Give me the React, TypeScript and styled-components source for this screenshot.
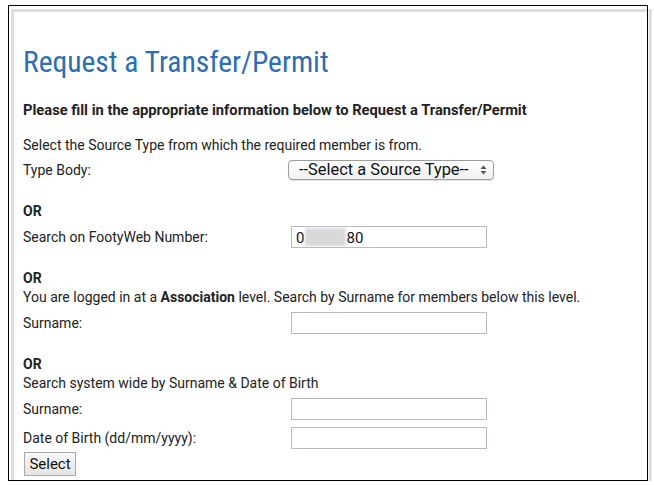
import React from "react";
import styled, { createGlobalStyle } from "styled-components";

const bodyFont = `Roboto, "Liberation Sans", sans-serif`;
const titleFont = `"Roboto Condensed", Roboto, "Liberation Sans", sans-serif`;

const GlobalStyle = createGlobalStyle`
  html, body {
    margin: 0;
    padding: 0;
    background: #ffffff;
  }
  body {
    font-family: ${bodyFont};
    color: #222222;
  }
`;

const Frame = styled.div`
  position: relative;
  margin: 5px 0 0 8px;
  width: 638px;
  height: 474px;
  border: 1px solid #000000;
  &::after {
    content: "";
    position: absolute;
    top: 3px;
    right: -5px;
    bottom: -6px;
    width: 3px;
    background: linear-gradient(to right, #d2d2d2, #ececec);
  }
`;

const Page = styled.div`
  margin: 3px 0 0 2px;
  height: 471px;
  box-sizing: border-box;
  border-top: 3px solid #dedede;
  border-left: 3px solid #dedede;
  padding: 33px 0 0 9px;
  overflow: hidden;
`;

const Title = styled.h1`
  margin: 0;
  font-family: ${titleFont};
  font-stretch: condensed;
  font-weight: 400;
  font-size: 29.5px;
  line-height: 35px;
  color: #2b6fb2;
`;

const Lead = styled.p`
  margin: 21px 0 0;
  font-size: 14.7px;
  line-height: 19px;
  font-weight: 700;
`;

const Text = styled.p<{ $gap?: number }>`
  margin: ${(p) => p.$gap ?? 0}px 0 0;
  font-size: 14px;
  line-height: 19px;
  b {
    font-weight: 700;
  }
`;

const Or = styled.p`
  margin: 20px 0 0;
  font-size: 14px;
  line-height: 19px;
  font-weight: 700;
`;

const Row = styled.div<{ $gap?: number }>`
  display: grid;
  grid-template-columns: 268px 1fr;
  align-items: center;
  height: 24px;
  margin-top: ${(p) => p.$gap ?? 3}px;
  font-size: 14px;
`;

const Field = styled.div`
  position: relative;
  width: 196px;
  height: 22px;
`;

const Input = styled.input`
  box-sizing: border-box;
  width: 196px;
  height: 22px;
  margin: 0;
  padding: 1px 4px 0;
  border: 1px solid #b9b9c2;
  border-radius: 0;
  background: #ffffff;
  font-family: ${bodyFont};
  font-size: 15px;
  color: #111111;
  outline: none;
`;

const Blur = styled.span`
  position: absolute;
  left: 14px;
  top: 2px;
  width: 41px;
  height: 18px;
  background: #d8d8d8;
  filter: blur(1.5px);
`;

const SelectWrap = styled.div`
  position: relative;
  width: 206px;
  height: 20px;
  margin-left: -3px;
`;

const Select = styled.select`
  appearance: none;
  box-sizing: border-box;
  width: 206px;
  height: 20px;
  margin: 0;
  padding: 0 0 0 10px;
  border: 1px solid #9c9c9c;
  border-radius: 4px;
  background: linear-gradient(#ffffff, #f1f1f1);
  box-shadow: 0 1px 1px rgba(0, 0, 0, 0.12);
  font-family: ${bodyFont};
  font-size: 16.4px;
  line-height: 18px;
  color: #111111;
`;

const Arrows = styled.svg`
  position: absolute;
  right: 7px;
  top: 5px;
  pointer-events: none;
`;

const Button = styled.button`
  margin: 2px 0 0 1px;
  box-sizing: border-box;
  width: 52px;
  height: 24px;
  padding: 0;
  border: 1px solid #a9a9a9;
  background: linear-gradient(#f8f8f8, #e4e4e4);
  font-family: ${bodyFont};
  font-size: 15px;
  color: #111111;
`;

export default function App() {
  return (
    <>
      <GlobalStyle />
      <Frame>
        <Page>
          <Title>Request a Transfer/Permit</Title>
          <Lead>Please fill in the appropriate information below to Request a Transfer/Permit</Lead>
          <Text $gap={16}>Select the Source Type from which the required member is from.</Text>
          <Row>
            <span>Type Body:</span>
            <SelectWrap>
              <Select defaultValue="">
                <option value="">--Select a Source Type--</option>
              </Select>
              <Arrows width="7" height="10" viewBox="0 0 7 10">
                <path d="M3.5 0.5 L6.5 4 H0.5 Z M3.5 9.5 L0.5 6 H6.5 Z" fill="#555555" />
              </Arrows>
            </SelectWrap>
          </Row>

          <Or>OR</Or>
          <Row $gap={4}>
            <span>Search on FootyWeb Number:</span>
            <Field>
              <Input defaultValue={"0\u2007\u2007\u2007\u2007\u200780"} />
              <Blur />
            </Field>
          </Row>

          <Or>OR</Or>
          <Text>
            You are logged in at a <b>Association</b> level. Search by Surname for members below this level.
          </Text>
          <Row $gap={4}>
            <span>Surname:</span>
            <Field>
              <Input />
            </Field>
          </Row>

          <Or>OR</Or>
          <Text>Search system wide by Surname &amp; Date of Birth</Text>
          <Row $gap={4}>
            <span>Surname:</span>
            <Field>
              <Input />
            </Field>
          </Row>
          <Row $gap={5}>
            <span>Date of Birth (dd/mm/yyyy):</span>
            <Field>
              <Input />
            </Field>
          </Row>
          <Button>Select</Button>
        </Page>
      </Frame>
    </>
  );
}
